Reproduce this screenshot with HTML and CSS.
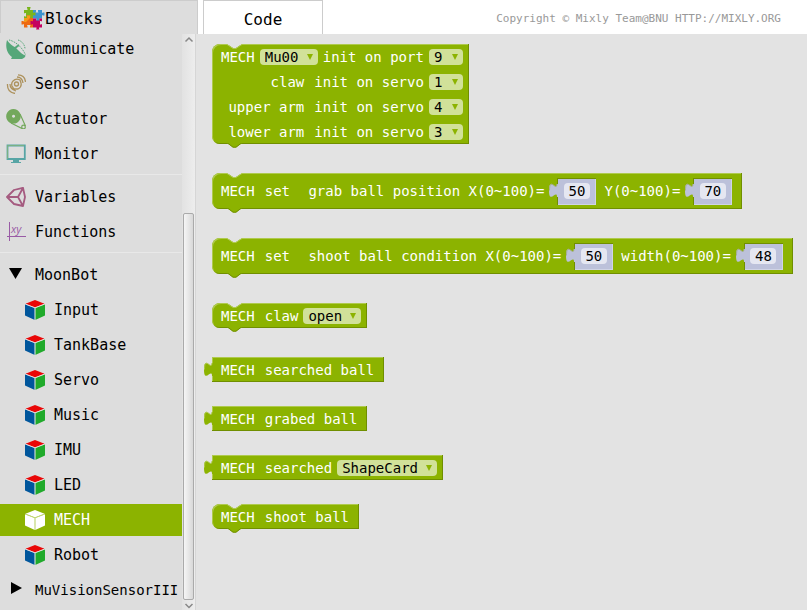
FILE: index.html
```html
<!DOCTYPE html>
<html lang="en">
<head>
<meta charset="utf-8">
<title>Mixly</title>
<link rel="stylesheet" href="styles.css">
</head>
<body>
<svg class="defs" aria-hidden="true">
  <symbol id="cube" viewBox="0 0 20 20">
    <path class="cube-top" d="M10 0 19.500 3.800 10 7.500.5 3.800z"/>
    <path class="cube-left" d="M0 4.200 9.800 8V20L0 15.500z"/>
    <path class="cube-right" d="M20 4.200 10.200 8V20L20 15.500z"/>
    <path class="cube-edge" d="M.2 4 10 7.800 19.800 4M10 7.800V20"/>
  </symbol>
  <symbol id="notch" viewBox="0 0 15 5">
    <path class="notch-fill" d="M0 0 6 4H9L15 0z"/>
    <path class="notch-line" d="M0 .5 6 4.500H9L15 .5"/>
  </symbol>
  <symbol id="foot" viewBox="0 0 15 5">
    <path class="foot-fill" d="M0 0H15L9 4.500H6z"/>
    <path class="foot-line" d="M.5 0 6 4.200H9L14.500 0"/>
  </symbol>
  <symbol id="plug" viewBox="0 0 10 17">
    <path class="plug-fill" d="M10 2H8C8 10 0-6 0 8.500S8 7 8 15H10z"/>
    <path class="plug-line" d="M8 2C7.500 10 .5-6 .5 8.500"/>
  </symbol>
</svg>

<aside class="sidebar">
  <button class="blocks-tab" type="button">
    <svg class="puzzle" viewBox="0 0 24 24" aria-hidden="true">
      <path fill="#3d95d0" d="M12 4H15V5.500L14.500 6.500H17.500L17 5.500V4H21V7L22 6.500H23.500V9.500H22L21 9V12.500H18V13.500L18.500 15H15L15.500 13.500V12.500H12z"/>
      <path fill="#7ab51d" d="M3 4H6.500V3L6 2V1H9.500V2L9 3V4H12V7L13 6.500H14.500V9.500H13L12 9V12.500H3V10L4 10.500H5V7H4L3 7.500z"/>
      <path fill="#ee6a12" d="M3 12H6V11L5.500 9.500H9.500L9 11V12H12V21.500H9V20.500L9.500 19H6L6.500 20.500V21.500H3V18L2 18.500H.5V15H2L3 15.500z"/>
      <path fill="#f59b1b" d="M3 12H6V11L5.500 9.500H9.500L9 11V12L5 16H3z"/>
      <path fill="#c5005f" d="M12 12.500H15.500L15 14.500H18.500L18 12.500H21V15.500L20 15H19V18.500H20L21 18V21.500H18V22.500L18.500 23.500H15L15.500 22.500V21.500H12V18L11 18.500H9.500V15H11L12 15.500z"/>
    </svg>
    <span>Blocks</span>
  </button>
  <div class="toolbox">
    <nav class="tree">
      <a class="row" href="#"><svg class="icon" viewBox="0 0 20 20" aria-hidden="true"><path fill="#55a779" d="M1 1C-1 8 1 15 6 18L5 20H16C18 19 19.500 18 19.500 16.500 17 15.500 15 14.500 13 12L9.500 8.500C6 7 3 4 1 1z"/><path fill="none" stroke="#55a779" stroke-dasharray="1.500 1" d="M3 1C9 2 17 9 19.500 16M12 1C16 2 19 6 19 10"/><path stroke="#55a779" stroke-width="2" d="M9 9 13 6"/></svg><span>Communicate</span></a>
      <a class="row" href="#"><svg class="icon" viewBox="0 0 20 20" aria-hidden="true"><g fill="none" stroke="#ad925d" stroke-width="1.300"><circle cx="10.500" cy="10" r="2"/><path d="M7 7Q10 4 14 6L15 9Q16 13 12 15H8L6 12Q5 9 7 7M11 3Q16 3 17 9M12 .8Q19 1 19.500 8M4 10Q4 15 10 17M1.500 10Q1 18 9 19.500"/></g></svg><span>Sensor</span></a>
      <a class="row" href="#"><svg class="icon" viewBox="0 0 20 20" aria-hidden="true"><path fill="#73a85c" fill-rule="evenodd" d="M7.500 0A7.300 7.300 0 1 1 7.400 0M7.500 5.800A1.500 1.500 0 1 0 7.600 5.800"/><g fill="none" stroke="#73a85c" stroke-width="1.200"><circle cx="17.500" cy="18" r="1.800"/><path d="M14 5 19.500 17M5 14 16 19.500"/></g></svg><span>Actuator</span></a>
      <a class="row" href="#"><svg class="icon" viewBox="0 0 20 20" aria-hidden="true"><path fill="none" stroke="#57a5a5" stroke-width="1.800" d="M1.500 1.500H18.800V15H1.500z"/><path fill="none" stroke="#79b183" d="M1.500 15V1.500H18"/><path fill="#57a5a5" d="M7 16H13V18H15V19H5V18H7z"/></svg><span>Monitor</span></a>
      <hr>
      <a class="row" href="#"><svg class="icon" viewBox="0 0 20 20" aria-hidden="true"><path fill="none" stroke="#a55b80" stroke-width="1.800" stroke-linejoin="round" d="M1 10 8 3 17 .8 19 10 17 19 8 17zM1 10H12M17 1 12 10 17 19"/></svg><span>Variables</span></a>
      <a class="row" href="#"><svg class="icon" viewBox="0 0 20 20" aria-hidden="true"><path fill="none" stroke="#995ba5" d="M3.500 0V19M1 14.500H20"/><text class="xy" x="5" y="11">xy</text></svg><span>Functions</span></a>
      <hr>
      <a class="row" href="#"><svg class="icon" viewBox="0 0 20 20" aria-hidden="true"><path d="M3 3H16L9.500 14z"/></svg><span>MoonBot</span></a>
      <a class="row child" href="#"><svg class="icon" aria-hidden="true"><use href="#cube"/></svg><span>Input</span></a>
      <a class="row child" href="#"><svg class="icon" aria-hidden="true"><use href="#cube"/></svg><span>TankBase</span></a>
      <a class="row child" href="#"><svg class="icon" aria-hidden="true"><use href="#cube"/></svg><span>Servo</span></a>
      <a class="row child" href="#"><svg class="icon" aria-hidden="true"><use href="#cube"/></svg><span>Music</span></a>
      <a class="row child" href="#"><svg class="icon" aria-hidden="true"><use href="#cube"/></svg><span>IMU</span></a>
      <a class="row child" href="#"><svg class="icon" aria-hidden="true"><use href="#cube"/></svg><span>LED</span></a>
      <a class="row child selected" href="#"><svg class="icon" aria-hidden="true"><use href="#cube"/></svg><span>MECH</span></a>
      <a class="row child" href="#"><svg class="icon" aria-hidden="true"><use href="#cube"/></svg><span>Robot</span></a>
      <a class="row long" href="#"><svg class="icon" viewBox="0 0 20 20" aria-hidden="true"><path d="M5 2V14L16 8z"/></svg><span>MuVisionSensorIII</span></a>
    </nav>
    <div class="scrollbar" aria-hidden="true">
      <svg class="arrow" viewBox="0 0 12 10"><path d="M2.500 7.500 6 4 9.500 7.500"/></svg>
      <div class="before"></div>
      <div class="thumb"></div>
      <svg class="arrow" viewBox="0 0 12 10"><path d="M2.500 4 6 7.500 9.500 4"/></svg>
    </div>
  </div>
</aside>

<main class="main">
  <header class="topbar">
    <button class="code-tab" type="button">Code</button>
    <span class="copyright">Copyright © Mixly Team@BNU HTTP://MIXLY.ORG</span>
  </header>
  <section class="flyout">
    <div class="block statement">
      <svg class="notch" aria-hidden="true"><use href="#notch"/></svg><svg class="foot" aria-hidden="true"><use href="#foot"/></svg>
      <div class="line"><span>MECH</span><span class="drop"><select class="medium" aria-label="Sensor"><option>Mu00</option></select></span><label for="port">init on port</label><span class="drop"><select id="port" class="digit"><option>9</option></select></span></div>
      <div class="line"><span>claw</span><label for="claw">init on servo</label><span class="drop"><select id="claw" class="digit"><option>1</option></select></span></div>
      <div class="line"><span>upper arm</span><label for="upper">init on servo</label><span class="drop"><select id="upper" class="digit"><option>4</option></select></span></div>
      <div class="line"><span>lower arm</span><label for="lower">init on servo</label><span class="drop"><select id="lower" class="digit"><option>3</option></select></span></div>
    </div>

    <div class="block statement tall">
      <svg class="notch" aria-hidden="true"><use href="#notch"/></svg><svg class="foot" aria-hidden="true"><use href="#foot"/></svg>
      <div class="line"><span>MECH</span><span>set </span><label for="gx">grab ball position X(0~100)=</label><span class="value"><svg class="plug" aria-hidden="true"><use href="#plug"/></svg><input id="gx" value="50"></span><label for="gy">Y(0~100)=</label><span class="value"><svg class="plug" aria-hidden="true"><use href="#plug"/></svg><input id="gy" value="70"></span></div>
    </div>

    <div class="block statement tall">
      <svg class="notch" aria-hidden="true"><use href="#notch"/></svg><svg class="foot" aria-hidden="true"><use href="#foot"/></svg>
      <div class="line"><span>MECH</span><span>set </span><label for="sx">shoot ball condition X(0~100)=</label><span class="value"><svg class="plug" aria-hidden="true"><use href="#plug"/></svg><input id="sx" value="50"></span><label for="sw">width(0~100)=</label><span class="value"><svg class="plug" aria-hidden="true"><use href="#plug"/></svg><input id="sw" value="48"></span></div>
    </div>

    <div class="block statement">
      <svg class="notch" aria-hidden="true"><use href="#notch"/></svg><svg class="foot" aria-hidden="true"><use href="#foot"/></svg>
      <div class="line"><span>MECH</span><label for="state">claw</label><span class="drop"><select id="state" class="medium"><option>open</option></select></span></div>
    </div>

    <div class="block output">
      <svg class="plug" aria-hidden="true"><use href="#plug"/></svg>
      <div class="line text-end"><span>MECH</span><span>searched ball</span></div>
    </div>

    <div class="block output">
      <svg class="plug" aria-hidden="true"><use href="#plug"/></svg>
      <div class="line text-end"><span>MECH</span><span>grabed ball</span></div>
    </div>

    <div class="block output">
      <svg class="plug" aria-hidden="true"><use href="#plug"/></svg>
      <div class="line"><span>MECH</span><label for="card">searched</label><span class="drop"><select id="card" class="wide"><option>ShapeCard</option></select></span></div>
    </div>

    <div class="block statement">
      <svg class="notch" aria-hidden="true"><use href="#notch"/></svg><svg class="foot" aria-hidden="true"><use href="#foot"/></svg>
      <div class="line text-end"><span>MECH</span><span>shoot ball</span></div>
    </div>
  </section>
</main>
</body>
</html>
```
FILE: styles.css
```css
:root {
  --green: #8cb300;
  --green-light: #afca4d;
  --green-dark: #708f00;
  --green-field: #d1e199;
  --canvas: #e3e3e3;
  --panel: #ddd;
  --line: #ccc;
}

* { box-sizing: border-box; }

body {
  margin: 0;
  height: 100vh;
  display: flex;
  overflow: hidden;
  background: var(--canvas);
  font-family: "DejaVu Sans Mono", monospace;
  color: #000;
}

button, input, select { font: inherit; color: inherit; }

.defs { position: absolute; width: 0; height: 0; }

/* Sidebar */
.sidebar {
  flex: none;
  width: 198px;
  display: flex;
  flex-direction: column;
}

.blocks-tab {
  display: flex;
  align-items: center;
  height: 34px;
  flex: none;
  padding: 1px 0 0 20px;
  border: 1px solid var(--line);
  border-bottom: 0;
  background: var(--panel);
  font-size: 16px;
}

.puzzle { width: 24px; height: 24px; }

.toolbox {
  flex: 1;
  min-height: 0;
  display: flex;
  width: 196px;
  border-right: 1px solid #d6d6d6;
}

.tree {
  flex: 1;
  min-width: 0;
  margin-top: -1px;
  overflow: hidden;
  background: var(--panel);
}

.row {
  display: flex;
  align-items: center;
  gap: 9px;
  height: 32px;
  margin-bottom: 3px;
  padding-left: 6px;
  font-size: 15px;
  white-space: nowrap;
  color: #000;
  text-decoration: none;
}

.child { padding-left: 25px; }
.long { font-size: 14px; }

.icon { width: 20px; height: 20px; flex: none; }
.xy { font: italic 11px "Open Sans", sans-serif; fill: #995ba5; }

.cube-top { fill: var(--cube, #e90707); }
.cube-left { fill: var(--cube, #00569c); }
.cube-right { fill: var(--cube, #20aa2b); }
.cube-edge { fill: none; stroke: var(--cube-edge, #e8e8e8); stroke-width: 0.8; }

.selected {
  --cube: #fff;
  --cube-edge: #c5d980;
  background: var(--green);
  color: #fff;
}

.tree hr {
  height: 1px;
  margin: 4px 0 6px;
  border: 0;
  background: #e8e8e8;
}

.scrollbar {
  flex: none;
  width: 13px;
  padding: 0 1px;
  display: flex;
  flex-direction: column;
  background: linear-gradient(90deg, #e2e2e2, #ededed);
}

.arrow { flex: none; width: 12px; height: 10px; }
.arrow path { fill: none; stroke: #888; stroke-width: 1.5; }
.before { flex: 170; }

.thumb {
  flex: 386;
  width: 11px;
  border: 1px solid #aaa;
  border-radius: 2px;
  background: linear-gradient(90deg, #f5f5f5, #d8d8d8);
}

/* Main area */
.main {
  flex: 1;
  min-width: 0;
  display: flex;
  flex-direction: column;
}

.topbar {
  display: flex;
  align-items: center;
  justify-content: space-between;
  height: 34px;
  padding: 0 26px 0 5px;
  background: #fff;
}

.code-tab {
  align-self: stretch;
  width: 120px;
  padding: 4px 0 0;
  border: 1px solid var(--line);
  border-bottom: 0;
  background: #fff;
  font-size: 16px;
}

.copyright { padding-top: 2px; font-size: 11px; color: #999; }

.flyout {
  display: flex;
  flex-direction: column;
  align-items: flex-start;
  gap: 24px;
  padding: 10px 14px;
}

.block {
  position: relative;
  padding: 0 6px 0 9px;
  background: var(--green);
  box-shadow: inset -1px -1px 0 var(--green-dark), inset 1px 1px 0 var(--green-light);
  font-size: 14px;
  color: #fff;
}

.statement { margin-bottom: 5px; border-radius: 8px 0 0 8px; }

.notch, .foot {
  position: absolute;
  left: 15px;
  width: 15px;
  height: 5px;
}
.notch { top: 0; }
.foot { top: calc(100% - 1px); }
.notch-fill { fill: var(--canvas); }
.notch-line { fill: none; stroke: var(--green-light); }
.foot-fill { fill: var(--green); }
.foot-line { fill: none; stroke: var(--green-dark); }

.plug {
  position: absolute;
  left: -8px;
  top: 4px;
  width: 10px;
  height: 17px;
}
.plug-fill { fill: var(--tab, var(--green)); }
.plug-line { fill: none; stroke: var(--tab-line, var(--green-light)); }

.line {
  display: flex;
  align-items: center;
  justify-content: flex-end;
  gap: 5px;
  height: 25px;
  white-space: pre;
}

.line > span:not(.drop):not(.value) + span:not(.drop),
.line > span:not(.drop):not(.value) + label { margin-left: 5px; }
.value + label { margin-left: 3px; }

.tall { padding-right: 10px; }
.tall .line { height: 36px; }
.text-end { padding-right: 4px; }

.drop { position: relative; display: flex; }

.drop::after {
  content: "";
  position: absolute;
  right: 5px;
  top: 5px;
  border: 3px solid transparent;
  border-top: 6px solid var(--green);
  border-bottom: 0;
  pointer-events: none;
}

.drop select {
  appearance: none;
  height: 16px;
  padding: 0 0 0 5px;
  border: 0;
  border-radius: 4px;
  background: var(--green-field);
  color: #000;
  line-height: 16px;
}

.digit { width: 34px; }
.medium { width: 58px; }
.wide { width: 100px; }

.value {
  --tab: #bcc1da;
  --tab-line: #a4ad90;
  position: relative;
  display: flex;
  align-items: center;
  justify-content: center;
  width: 39px;
  height: 27px;
  margin-left: 8px;
  background: #bcc1da;
  box-shadow: inset 1px 1px 0 var(--green-dark), inset -1px -1px 0 #d0d4e5;
}

.value input {
  width: 26px;
  height: 16px;
  padding: 0;
  border: 0;
  border-radius: 4px;
  background: #e5e7f1;
  color: #000;
  text-align: center;
}
```
